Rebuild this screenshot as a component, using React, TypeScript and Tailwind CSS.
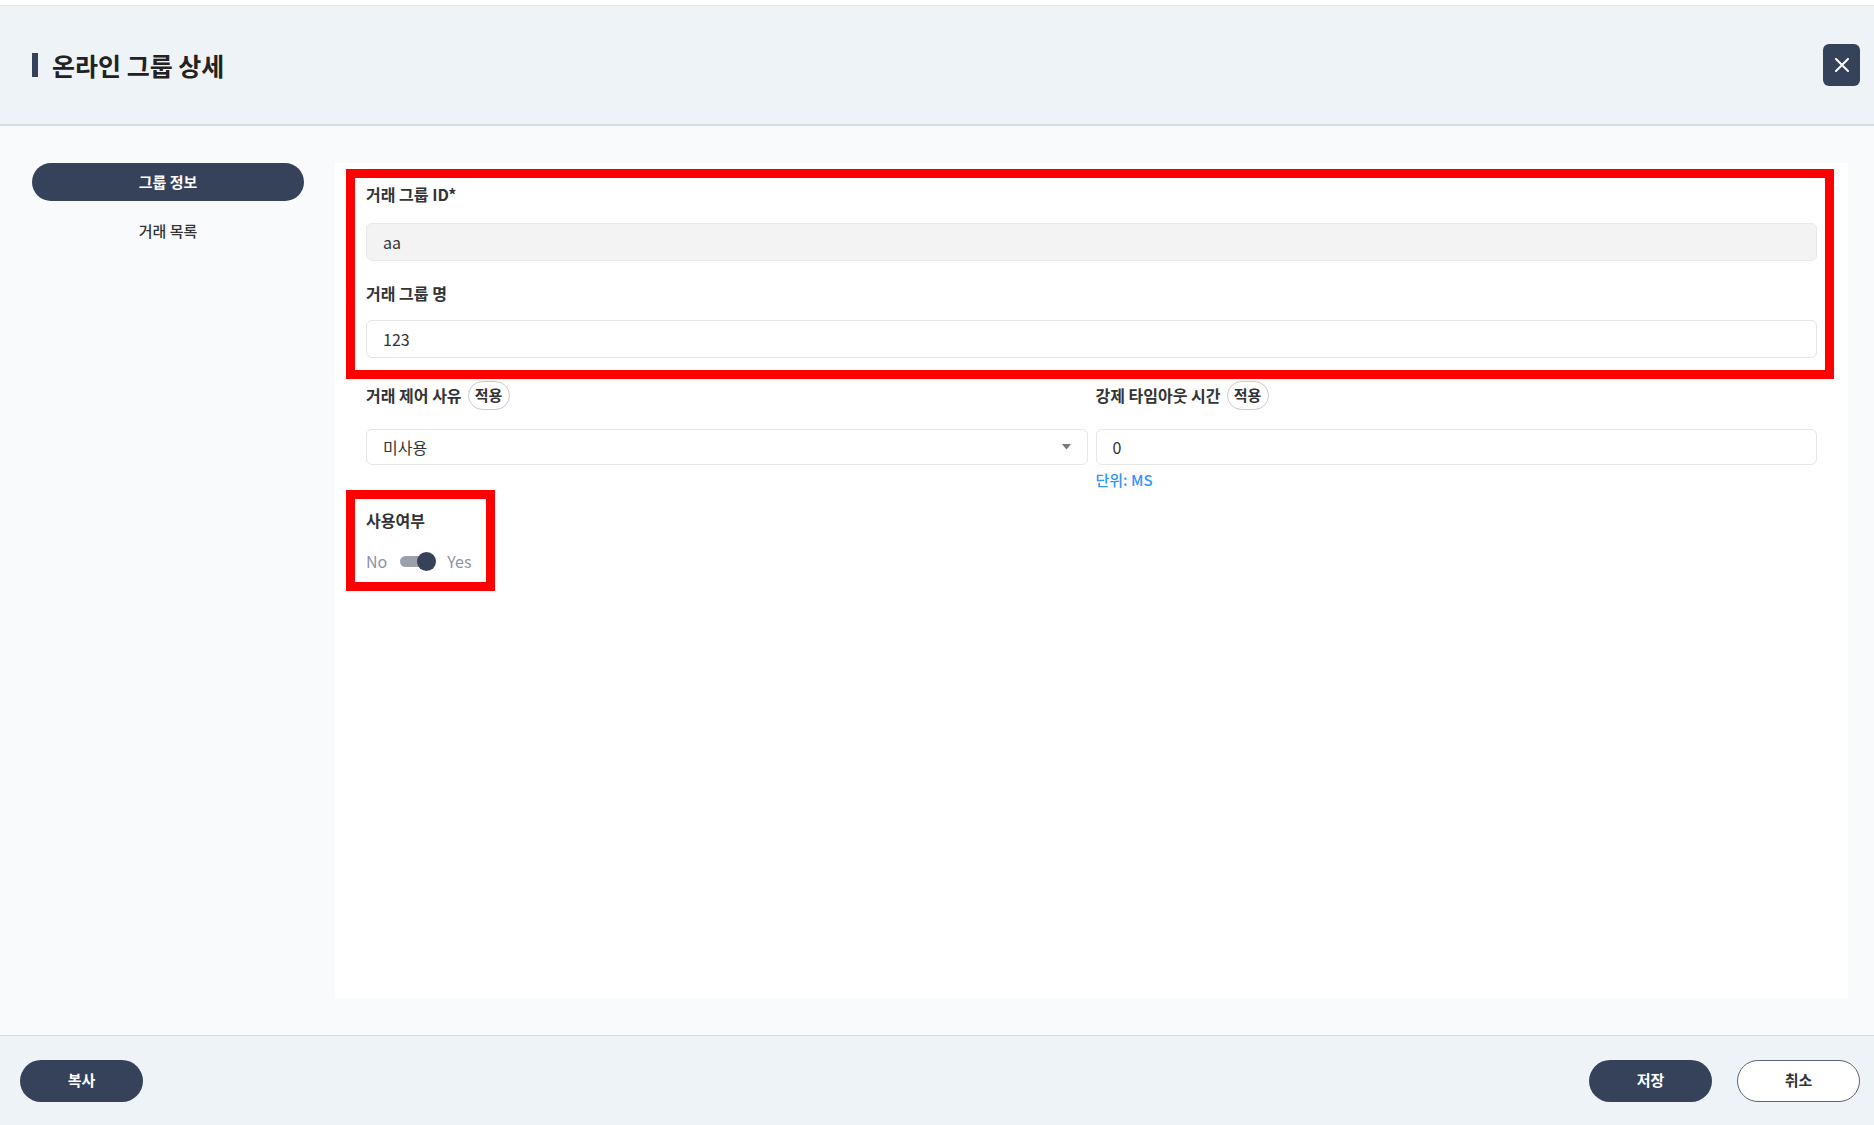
import React from "react";

function Badge() {
  return (
    <span className="ml-[6px] inline-flex h-[29px] w-[42px] items-center justify-center rounded-full border border-[#c9c9c9] bg-white text-[15px] font-bold text-[#333]">
      적용
    </span>
  );
}

export default function App() {
  return (
    <div className="flex h-[1125px] w-full flex-col bg-white font-['Noto_Sans_CJK_KR',sans-serif] text-[#333]">
      <div className="h-[5px] bg-white" />
      {/* Header */}
      <div className="flex h-[121px] items-center justify-between border-t border-b-2 border-t-[#e2e6eb] border-b-[#d6dde6] bg-[#eef3f8] pl-[32px] pr-[14px]">
        <div className="flex items-center">
          <div className="mr-[14px] h-[24px] w-[6px] bg-[#354259]" />
          <h1 className="text-[25px] font-bold leading-none text-[#222]">온라인 그룹 상세</h1>
        </div>
        <button className="flex h-[42px] w-[37px] items-center justify-center rounded-[6px] bg-[#354259]">
          <svg width="14" height="14" viewBox="0 0 14 14" fill="none">
            <path d="M1 1L13 13M13 1L1 13" stroke="white" strokeWidth="2" strokeLinecap="round" />
          </svg>
        </button>
      </div>

      {/* Body */}
      <div className="flex flex-1 bg-[#f8fafc] pb-[37px] pl-[32px] pr-[26px] pt-[37px]">
        <div className="mr-[31px] flex w-[272px] flex-col">
          <div className="flex h-[38px] items-center justify-center rounded-full bg-[#354259] text-[15px] font-bold text-white">
            그룹 정보
          </div>
          <div className="mt-[11px] flex h-[38px] items-center justify-center text-[15px] font-medium text-[#333]">
            거래 목록
          </div>
        </div>

        <div className="flex-1 bg-white px-[31px] pt-[21px]">
          {/* Group 1 */}
          <div className="relative">
            <div className="h-[20px] text-[16px] font-bold leading-[20px] text-[#333]">거래 그룹 ID*</div>
            <div className="mt-[19px] flex h-[38px] items-center rounded-[6px] border border-[#e9e9e9] bg-[#f3f3f3] pl-[16px] text-[16px] text-[#333]">
              aa
            </div>
            <div className="mt-[22px] h-[20px] text-[16px] font-bold leading-[20px] text-[#333]">거래 그룹 명</div>
            <div className="mt-[17px] flex h-[38px] items-center rounded-[6px] border border-[#e6e6e6] bg-white pl-[16px] text-[16px] text-[#333]">
              123
            </div>
            <div className="pointer-events-none absolute -bottom-[21px] -left-[20px] -right-[17px] -top-[15px] border-[9px] border-[#ff0000]" />
          </div>

          {/* Row */}
          <div className="mt-[23px] grid grid-cols-2 gap-x-[8px]">
            <div>
              <div className="flex h-[28px] items-center text-[16px] font-bold text-[#333]">
                거래 제어 사유
                <Badge />
              </div>
              <div className="mt-[20px] flex h-[36px] items-center justify-between rounded-[6px] border border-[#e6e6e6] bg-white pl-[16px] pr-[16px] text-[16px] text-[#333]">
                <span>미사용</span>
                <svg width="9" height="6" viewBox="0 0 9 6">
                  <path d="M0 0H9L4.5 5.5Z" fill="#7a7a7a" />
                </svg>
              </div>
            </div>
            <div>
              <div className="flex h-[28px] items-center text-[16px] font-bold text-[#333]">
                강제 타임아웃 시간
                <Badge />
              </div>
              <div className="mt-[20px] flex h-[36px] items-center rounded-[6px] border border-[#e6e6e6] bg-white pl-[16px] text-[16px] text-[#333]">
                0
              </div>
              <div className="mt-[5px] h-[20px] text-[15px] font-medium leading-[20px] text-[#2f95ff]">단위: MS</div>
            </div>
          </div>

          {/* Toggle group */}
          <div className="relative mt-[20px] w-fit">
            <div className="h-[20px] text-[16px] font-bold leading-[20px] text-[#333]">사용여부</div>
            <div className="mt-[21px] flex h-[20px] items-center">
              <span className="text-[16px] leading-[20px] text-[#8c95a3]">No</span>
              <div className="relative ml-[13px] h-[19px] w-[36px]">
                <div className="absolute left-0 top-[4px] h-[11px] w-[30px] rounded-full bg-[#9aa1ad]" />
                <div className="absolute right-0 top-0 h-[19px] w-[19px] rounded-full bg-[#354259]" />
              </div>
              <span className="ml-[11px] text-[16px] leading-[20px] text-[#8c95a3]">Yes</span>
            </div>
            <div className="pointer-events-none absolute -bottom-[20px] -left-[20px] -top-[20px] w-[149px] border-[9px] border-[#ff0000]" />
          </div>
        </div>
      </div>

      {/* Footer */}
      <div className="flex h-[90px] items-center justify-between border-t border-[#d5dce5] bg-[#eef3f8] pl-[20px] pr-[14px]">
        <button className="flex h-[42px] w-[123px] items-center justify-center rounded-full bg-[#354259] text-[15px] font-bold text-white">
          복사
        </button>
        <div className="flex items-center gap-[25px]">
          <button className="flex h-[42px] w-[123px] items-center justify-center rounded-full bg-[#354259] text-[15px] font-bold text-white">
            저장
          </button>
          <button className="flex h-[42px] w-[123px] items-center justify-center rounded-full border border-[#5b6577] bg-white text-[15px] font-bold text-[#333]">
            취소
          </button>
        </div>
      </div>
    </div>
  );
}
